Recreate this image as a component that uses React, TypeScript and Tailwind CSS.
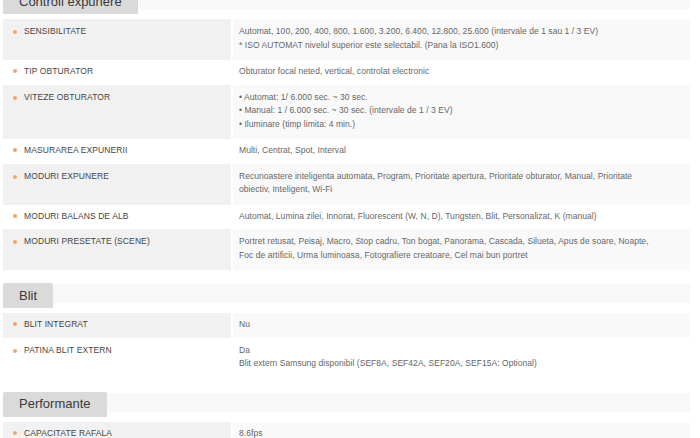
const sections = [
  {
    title: "Controll expunere",
    rows: [
      {
        label: "SENSIBILITATE",
        lines: [
          "Automat, 100, 200, 400, 800, 1.600, 3.200, 6.400, 12.800, 25.600 (intervale de 1 sau 1 / 3 EV)",
          "* ISO AUTOMAT nivelul superior este selectabil. (Pana la ISO1.600)",
        ],
      },
      { label: "TIP OBTURATOR", lines: ["Obturator focal neted, vertical, controlat electronic"] },
      {
        label: "VITEZE OBTURATOR",
        lines: [
          "• Automat: 1/ 6.000 sec. ~ 30 sec.",
          "• Manual: 1 / 6.000 sec. ~ 30 sec. (intervale de 1 / 3 EV)",
          "• Iluminare (timp limita: 4 min.)",
        ],
      },
      { label: "MASURAREA EXPUNERII", lines: ["Multi, Centrat, Spot, Interval"] },
      {
        label: "MODURI EXPUNERE",
        lines: [
          "Recunoastere inteligenta automata, Program, Prioritate apertura, Prioritate obturator, Manual, Prioritate",
          "obiectiv, Inteligent, Wi-Fi",
        ],
      },
      {
        label: "MODURI BALANS DE ALB",
        lines: ["Automat, Lumina zilei, Innorat, Fluorescent (W, N, D), Tungsten, Blit, Personalizat, K (manual)"],
      },
      {
        label: "MODURI PRESETATE (SCENE)",
        lines: [
          "Portret retusat, Peisaj, Macro, Stop cadru, Ton bogat, Panorama, Cascada, Silueta, Apus de soare, Noapte,",
          "Foc de artificii, Urma luminoasa, Fotografiere creatoare, Cel mai bun portret",
        ],
      },
    ],
  },
  {
    title: "Blit",
    rows: [
      { label: "BLIT INTEGRAT", lines: ["Nu"] },
      {
        label: "PATINA BLIT EXTERN",
        lines: ["Da", "Blit extern Samsung disponibil (SEF8A, SEF42A, SEF20A, SEF15A: Optional)"],
      },
    ],
  },
  {
    title: "Performante",
    rows: [{ label: "CAPACITATE RAFALA", lines: ["8.6fps"] }],
  },
];

function SpecRow({ label, lines, shaded }: { label: string; lines: string[]; shaded: boolean }) {
  const multi = lines.length > 1;
  const pad = multi ? "pt-[6px] pb-[8px] leading-[13.5px]" : "pt-[4px] pb-[6px] leading-[14.5px]";
  return (
    <div className="flex">
      <div className={`w-[228px] shrink-0 flex items-start pl-[10px] ${pad} ${shaded ? "bg-[#f1f1f1]" : "bg-white"}`}>
        <span className="mt-[5px] mr-[7px] w-[4px] h-[4px] rounded-full bg-[#f5a36a] shrink-0" />
        <span className="text-[8.5px] text-[#444] tracking-[0.1px]">{label}</span>
      </div>
      <div className={`flex-1 ml-[2px] pl-[6px] ${pad} ${shaded ? "bg-[#f9f9f9]" : "bg-white"}`}>
        {lines.map((l, i) => (
          <div key={i} className="text-[8.5px] text-[#666] whitespace-nowrap tracking-[0.05px]">
            {l}
          </div>
        ))}
      </div>
    </div>
  );
}

export default function App() {
  return (
    <div
      className="w-[700px] h-[438px] overflow-hidden bg-white"
      style={{ fontFamily: '"Liberation Sans", Arial, sans-serif' }}
    >
      <div className="-mt-[11px] mx-[3px] w-[687px]">
        {sections.map((s, si) => (
          <div key={s.title} className={si > 0 ? "mt-[13px]" : ""}>
            <div className="flex items-start mb-[5px]">
              <div className="h-[25px] px-[16px] flex items-center bg-[#dadada] rounded-t-[2px] text-[13px] text-[#3a3a3a]">
                {s.title}
              </div>
              <div className="flex-1 h-[19px] mt-[1px] bg-[#f8f8f8]" />
            </div>
            {s.rows.map((r, ri) => (
              <SpecRow key={r.label} label={r.label} lines={r.lines} shaded={ri % 2 === 0} />
            ))}
          </div>
        ))}
      </div>
    </div>
  );
}
